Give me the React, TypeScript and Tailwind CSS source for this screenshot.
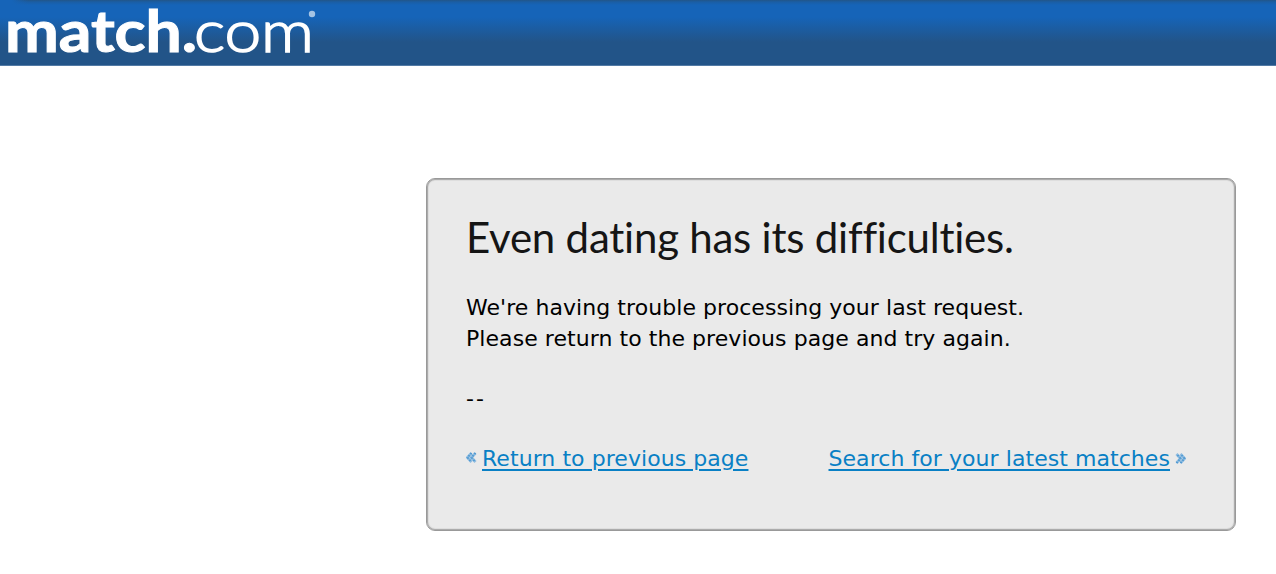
import React from 'react';

const Logo = () => (
  <svg width="330" height="65" viewBox="0 0 330 65" fill="white" className="block overflow-visible font-['Lato',sans-serif]">
    <text x="5" y="52" fontSize="57" fontWeight="700" stroke="white" strokeWidth="1" textLength="192" lengthAdjust="spacingAndGlyphs">
      match.
    </text>
    <text x="194" y="52" fontSize="58" fontWeight="300" stroke="white" strokeWidth="1.6" textLength="120" lengthAdjust="spacingAndGlyphs">
      com
    </text>
    <circle cx="312" cy="14" r="3.2" fill="#a5c4e4" />
  </svg>
);

interface ChevronsProps {
  flip?: boolean;
}

const Chevrons: React.FC<ChevronsProps> = ({ flip }) => (
  <svg width="11" height="11" viewBox="0 0 11 11" className={flip ? 'rotate-180 mb-[2px]' : 'mb-[4px]'}>
    <path d="M5.5 1 1.5 5.5 5.5 10M9.5 1 5.5 5.5 9.5 10" fill="none" stroke="#8fbce0" strokeWidth="2.8" />
    <path d="M5.5 1 1.5 5.5 5.5 10M9.5 1 5.5 5.5 9.5 10" fill="none" stroke="#4a96d0" strokeWidth="1.6" strokeDasharray="1.5 1.5" />
  </svg>
);

const App: React.FC = () => {
  return (
    <div className="h-[574px] bg-white overflow-hidden font-['DejaVu_Sans',sans-serif] text-[22px] text-black">
      <header className="h-[66px] border-b border-[#527aa5] bg-[linear-gradient(90deg,#1664b8_12px,transparent_28px),linear-gradient(180deg,#225588_0px,#1a5ea5_2px,#1664b8_5px,#1664b8_17px,#225488_42px)] bg-[length:100%_5px,100%_100%] bg-no-repeat">
        <Logo />
      </header>

      <main className="mt-[112px] ml-[426px] w-[810px] h-[353px] rounded-[9px] border border-[#999999] shadow-[inset_0_0_0_1px_#acacac,inset_0_0_0_2px_#dedede] bg-[#eaeaea] pt-px pl-[39px] pr-[49px]">
        <h1 className="mt-[31px] h-[52px] font-['Lato',sans-serif] text-[42px] leading-[52px] tracking-[-0.23px] text-[#151515] whitespace-nowrap [font-variant-ligatures:none]">
          Even dating has its difficulties.
        </h1>

        <div className="mt-[29px] leading-[31px] tracking-[0.06px] whitespace-nowrap">
          <p>We're having trouble processing your last request.</p>
          <p>Please return to the previous page and try again.</p>
        </div>
        <p className="mt-[30px] leading-[30px] tracking-[2px]">--</p>

        <nav className="mt-[30px] flex justify-between leading-[30px] tracking-[0.06px] whitespace-nowrap">
          <div className="flex items-center gap-[5px]">
            <Chevrons />
            <a href="#" className="text-[#0980c5] underline decoration-2 underline-offset-3">Return to previous page</a>
          </div>
          <div className="flex items-center gap-[5px]">
            <a href="#" className="text-[#0980c5] underline decoration-2 underline-offset-3">Search for your latest matches</a>
            <Chevrons flip />
          </div>
        </nav>
      </main>
    </div>
  );
};

export default App;
